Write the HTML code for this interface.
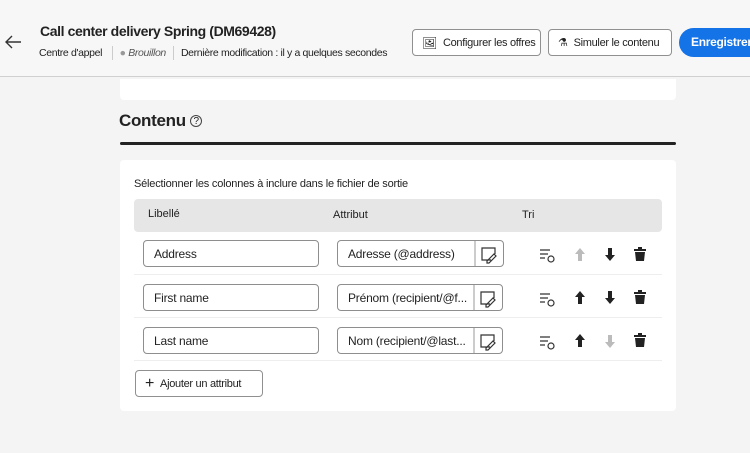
<!DOCTYPE html>
<html><head><meta charset="utf-8"><style>
*{box-sizing:border-box;margin:0;padding:0}
body{width:750px;height:453px;background:#f4f4f4;font-family:"Liberation Sans",sans-serif;color:#222;position:relative;overflow:hidden;font-size:12px}
.abs{position:absolute;white-space:nowrap}
.btn{position:absolute;border:1px solid #909090;border-radius:4px;background:#fff;font-size:11px;letter-spacing:-0.3px;display:flex;align-items:center;gap:6px;padding-left:9px;color:#222;white-space:nowrap;overflow:hidden}
.inp{position:absolute;border:1px solid #8e8e8e;border-radius:4px;background:#fff;height:27px;display:flex;align-items:center;padding-left:10px;font-size:12px;white-space:nowrap;letter-spacing:-0.2px}
.row{position:absolute;left:134px;width:528px;height:42px;background:#fff;border-bottom:1px solid #eee}
</style></head><body>
<div class="abs" style="left:0;top:0;width:750px;height:77px;background:#f7f7f7;border-bottom:1px solid #d0d0d0"></div>
<svg class="abs" style="left:4px;top:35px" width="18" height="14"><path d="M17 7H2M8 1L2 7l6 6" stroke="#333" stroke-width="1.4" fill="none"/></svg>
<div class="abs" style="left:40px;top:23px;font-size:14px;font-weight:bold;letter-spacing:-0.4px">Call center delivery Spring (DM69428)</div>
<div class="abs" style="left:39px;top:46px;font-size:10.5px;letter-spacing:-0.35px">Centre d'appel <span style="display:inline-block;width:1px;height:14px;background:#ccc;vertical-align:middle;margin:0 7px"></span><span style="color:#999">●</span> <i style="color:#555">Brouillon</i><span style="display:inline-block;width:1px;height:14px;background:#ccc;vertical-align:middle;margin:0 7px"></span>Dernière modification : il y a quelques secondes</div>
<div class="btn" style="left:412px;top:29px;width:129px;height:27px"><span style="font-size:12px">🖼</span>Configurer les offres</div>
<div class="btn" style="left:548px;top:29px;width:124px;height:27px"><span>⚗</span>Simuler le contenu</div>
<div class="abs" style="left:679px;top:28px;width:90px;height:29px;background:#1473e6;border-radius:15px;color:#fff;font-weight:bold;font-size:12px;padding:7px 0 0 12px;letter-spacing:-0.3px">Enregistrer</div>
<div class="abs" style="left:120px;top:79px;width:556px;height:21px;background:#fff;border-radius:0 0 4px 4px"></div>
<div class="abs" style="left:119px;top:111px;font-size:17px;font-weight:bold;color:#222;letter-spacing:-0.3px">Contenu <span style="font-size:10px;font-weight:normal;border:1px solid #444;border-radius:50%;display:inline-block;width:12px;height:12px;line-height:11px;text-align:center;vertical-align:2px;letter-spacing:0">?</span></div>
<div class="abs" style="left:120px;top:142px;width:556px;height:3px;background:#222;border-radius:2px"></div>
<div class="abs" style="left:120px;top:160px;width:556px;height:251px;background:#fff;border-radius:4px"></div>
<div class="abs" style="left:134px;top:178px;font-size:11px;letter-spacing:-0.2px">Sélectionner les colonnes à inclure dans le fichier de sortie</div>
<div class="abs" style="left:134px;top:199px;width:528px;height:33px;background:#e6e6e6;border-radius:4px;font-size:11px">
<span class="abs" style="left:14px;top:9px">Libellé</span><span class="abs" style="left:199px;top:10px">Attribut</span><span class="abs" style="left:388px;top:10px">Tri</span></div>

<div class="row" style="top:233px"></div>
<div class="row" style="top:276px"></div>
<div class="row" style="top:319px"></div>

<div class="inp" style="left:143px;top:240px;width:176px">Address</div>
<div class="inp" style="left:337px;top:240px;width:167px">Adresse (@address)</div>
<div class="inp" style="left:143px;top:284px;width:176px">First name</div>
<div class="inp" style="left:337px;top:284px;width:166px">Prénom (recipient/@f...</div>
<div class="inp" style="left:143px;top:327px;width:176px">Last name</div>
<div class="inp" style="left:337px;top:327px;width:166px">Nom (recipient/@last...</div>

<svg class="abs" style="left:0;top:0" width="750" height="453">
<g stroke="#999" stroke-width="1"><line x1="475" y1="241" x2="475" y2="266"/><line x1="474" y1="285" x2="474" y2="310"/><line x1="474" y1="328" x2="474" y2="353"/></g>
<g fill="none" stroke="#333" stroke-width="1.2">
<path d="M491 260h-9v-12h13v6M487 261l7-7 2 2-7 7h-2z"/>
<path d="M490 304h-9v-12h13v6M486 305l7-7 2 2-7 7h-2z"/>
<path d="M490 347h-9v-12h13v6M486 348l7-7 2 2-7 7h-2z"/>
</g>
<g stroke="#333" stroke-width="1.2" fill="none">
<path d="M540 250h10M540 254h8M540 258h5"/><circle cx="551" cy="259" r="3"/>
<path d="M540 294h10M540 298h8M540 302h5"/><circle cx="551" cy="303" r="3"/>
<path d="M540 337h10M540 341h8M540 345h5"/><circle cx="551" cy="346" r="3"/>
</g>
<path d="M580 248l-5 6h3v7h4v-7h3z" fill="#bbb"/>
<path d="M610 261l-5-6h3v-7h4v7h3z" fill="#222"/>
<path d="M580 291l-5 6h3v7h4v-7h3z" fill="#222"/>
<path d="M610 304l-5-6h3v-7h4v7h3z" fill="#222"/>
<path d="M580 334l-5 6h3v7h4v-7h3z" fill="#222"/>
<path d="M610 348l-5-6h3v-7h4v7h3z" fill="#bbb"/>
<g fill="#222"><path d="M634 249h12v2h-12zM638 247h4v2h-4zM635 252h10l-1 9h-8z"/><path d="M634 292h12v2h-12zM638 290h4v2h-4zM635 295h10l-1 9h-8z"/><path d="M634 335h12v2h-12zM638 333h4v2h-4zM635 338h10l-1 9h-8z"/></g>
</svg>
<div class="btn" style="left:135px;top:370px;width:128px;height:27px;padding-left:9px"><span style="font-size:16px;line-height:1">+</span>Ajouter un attribut</div>
</body></html>
